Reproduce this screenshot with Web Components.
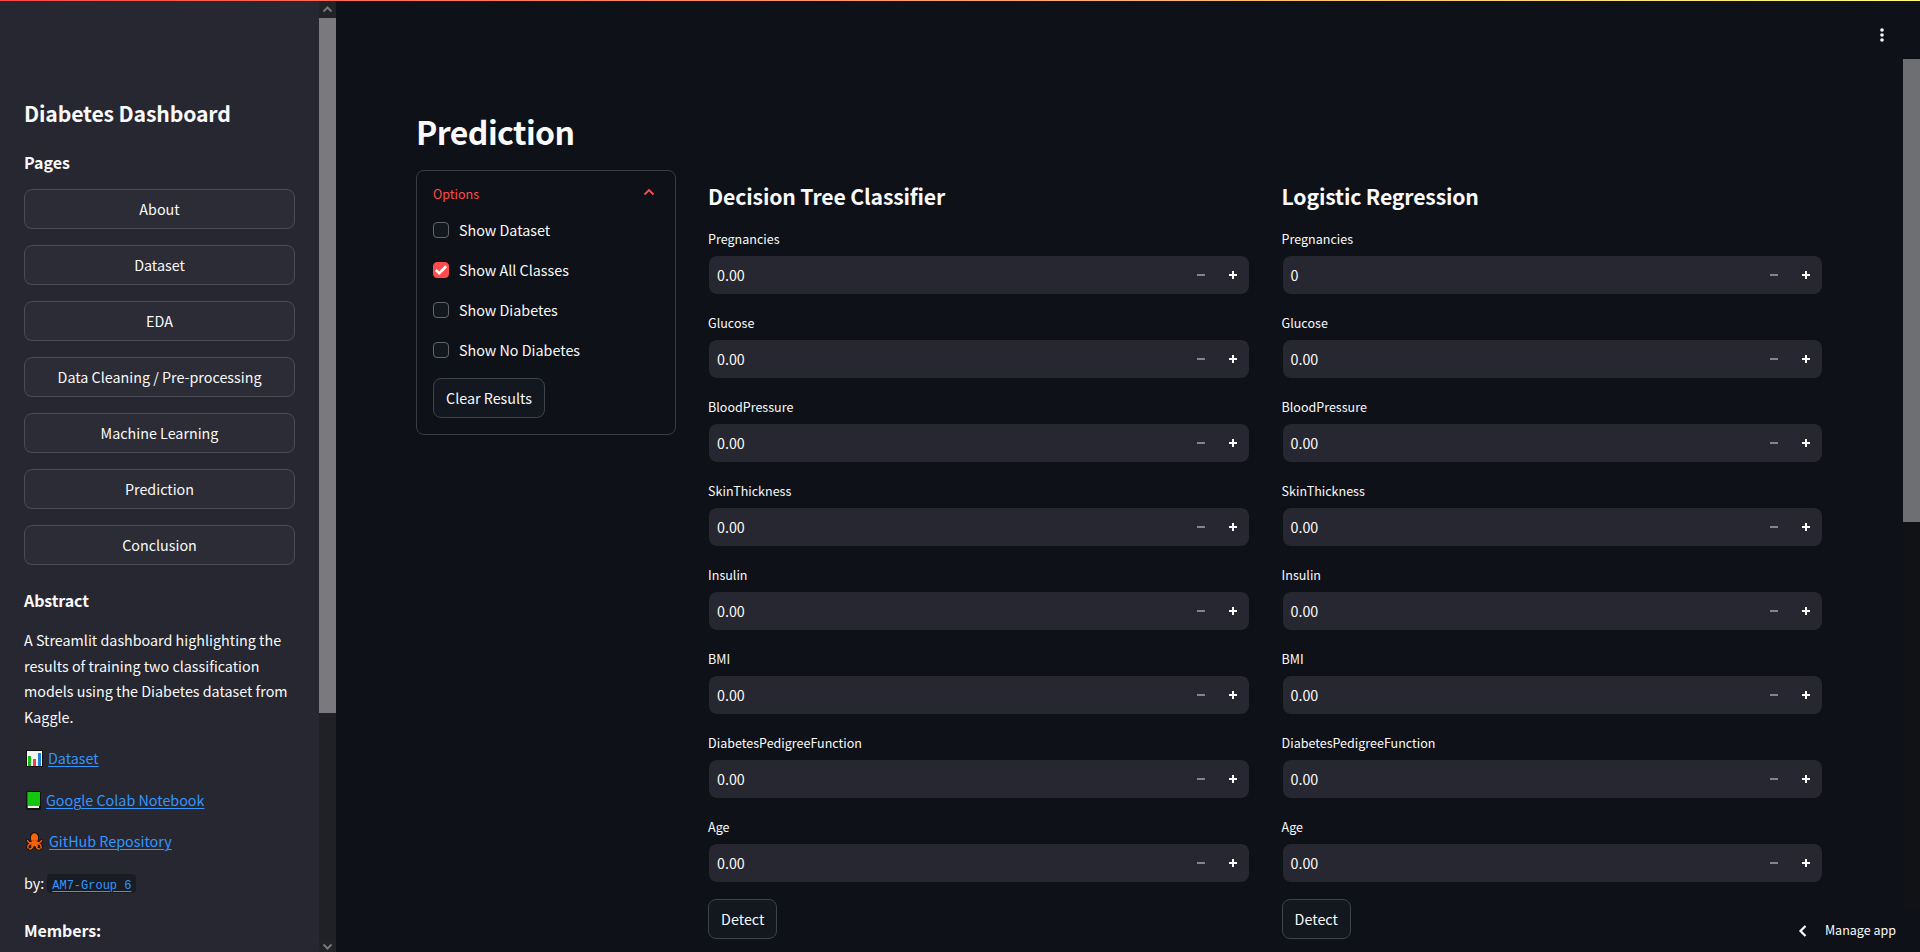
<!DOCTYPE html>
<html lang="en">
<head>
<meta charset="utf-8">
<title>Diabetes Dashboard</title>
<style>
html,body{margin:0;height:100%;overflow:hidden;background:#0e1117}
body{font-family:"Noto Sans CJK SC","Noto Sans",sans-serif;font-size:14.32px;color:#fafafa}
</style>
</head>
<body>
<dash-app></dash-app>
<script>
const define = (name, html, init) => {
  const t = document.createElement('template');
  t.innerHTML = '<style>*{box-sizing:border-box}:host{display:block;box-sizing:border-box}</style>' + html;
  customElements.define(name, class extends HTMLElement {
    connectedCallback() {
      if (this.shadowRoot) return;
      const root = this.attachShadow({mode: 'open'});
      root.append(t.content.cloneNode(true));
      if (init) init(this, root);
    }
  });
};

define('st-button', `<style>
:host{height:40px;border:1px solid #4b4c54;border-radius:8px;background:#2b2c36;display:flex;align-items:center;justify-content:center;white-space:nowrap;line-height:24px}
:host([dark]){background:#131720;border-color:#40434a;width:fit-content;padding:0 12px}
</style><span><slot></slot></span>`);

define('st-heading', `<style>
:host{font-weight:700;display:flex;align-items:center;white-space:nowrap;height:var(--h,30px);font-size:var(--fs,16px);line-height:1.2;letter-spacing:var(--ls,0)}
</style><slot></slot>`);

define('st-link', `<style>
:host{display:flex;align-items:center;height:25.6px;margin-bottom:15.9px;line-height:25.6px}
a{color:#3296ff;text-decoration:underline;text-underline-offset:2px;text-decoration-thickness:1px;white-space:nowrap}
::slotted(svg){flex:none;margin-right:var(--gap,5px)}
</style><slot name="icon"></slot><a><slot></slot></a>`);

define('st-scrollbar', `<style>
:host{width:17px;display:flex;flex-direction:column;flex:none;background:var(--track,#202127)}
.arrow{height:17px;display:flex;align-items:center;justify-content:center;background:#222327;flex:none;padding-bottom:2px}
.arrow svg{display:block}
.thumb{height:var(--thumb,463px);background:var(--thumb-color,#7a797e)}
.fill{flex:1}
:host([plain]) .arrow{display:none}
path{fill:none;stroke:#77777c;stroke-width:2}
</style>
<div class="arrow"><svg width="11" height="8"><path d="M1.5 6.5 5.5 2.5 9.5 6.5"/></svg></div>
<div class="thumb"></div><div class="fill"></div>
<div class="arrow" style="height:14px;padding:4px 0 0"><svg width="11" height="8"><path d="M1.5 1.5 5.5 5.5 9.5 1.5"/></svg></div>`);

define('st-checkbox', `<style>
:host{display:flex;height:24px;align-items:center;margin-bottom:16px;line-height:24px;white-space:nowrap}
.box{width:16px;height:16px;border:1px solid #62646b;border-radius:4px;background:#131720;margin:0 10px 1px 0;flex:none}
:host([checked]) .box{background:#ff4b4b;border-color:#ff4b4b}
svg{display:none}
:host([checked]) svg{display:block}
</style>
<div class="box"><svg width="14" height="14"><path d="M1.8 7 5.2 10.1 12.2 3.2" fill="none" stroke="#fff" stroke-width="2.6"/></svg></div><slot></slot>`);

define('st-number', `<style>
:host{height:84px}
label{display:flex;align-items:center;height:24px;font-size:12.53px;line-height:24px;margin-bottom:5px}
.field{height:38px;margin-left:1px;background:#262730;border-radius:8px;display:flex;align-items:center;padding:0 9px 0 7.9px}
.val{flex:1;line-height:24px}
svg{display:block;flex:none}
</style>
<label></label><div class="field"><span class="val"></span>
<svg width="46" height="16"><path d="M3 8h8" stroke="#808495" stroke-width="2"/><path d="M35 8h8M39 4v8" stroke="#fff" stroke-width="2"/></svg></div>`,
(el, r) => {
  r.querySelector('label').textContent = el.getAttribute('label');
  r.querySelector('.val').textContent = el.getAttribute('value');
});

define('model-form', `<style>
:host{display:block;min-width:0}
st-heading{--fs:21.2px;--ls:-.15px;--h:40px;margin-bottom:11px}
#rows{display:block}
</style><st-heading><slot></slot></st-heading><div id="rows"></div><st-button dark>Detect</st-button>`,
(el, r) => {
  const names = ['Pregnancies','Glucose','BloodPressure','SkinThickness','Insulin','BMI','DiabetesPedigreeFunction','Age'];
  names.forEach((n, i) => {
    const f = document.createElement('st-number');
    f.setAttribute('label', n);
    f.setAttribute('value', i === 0 ? el.getAttribute('first') : '0.00');
    r.getElementById('rows').append(f);
  });
});

define('st-expander', `<style>
:host{height:265px;border:1px solid #3b3d43;border-radius:8px;padding:11px 16px 16px}
header{display:flex;justify-content:space-between;align-items:center;height:22px;color:#ff4b4b;font-size:12.53px;margin-bottom:14px;padding-right:4px}
st-button{margin-top:-1px}
</style>
<header><span>Options</span><svg width="12" height="10"><path d="M1.5 6.5 6 2 10.5 6.5" fill="none" stroke="#ff4b4b" stroke-width="1.8"/></svg></header>
<slot></slot>`);

define('side-bar', `<style>
:host{width:336px;height:952px;display:flex;background:#262730;flex:none;overflow:hidden}
.content{width:319px;padding:93px 24px 0;flex:none}
nav{display:grid;gap:16px;margin-bottom:20px}
p{margin:0;line-height:25.6px;white-space:nowrap}
.by{display:flex;align-items:center;height:25.6px;margin-bottom:19px}
code{font-family:"Liberation Mono",monospace;font-size:12px;line-height:19px;height:19px;padding:0 5px;border-radius:4px;background:#1a1c24;color:#3296ff;margin:1px 0 0 3px;white-space:pre}
code span{position:relative;top:3px;text-decoration:underline;text-underline-offset:2px}
</style>
<div class="content">
<st-heading style="--fs:21.2px;--ls:-.15px;--h:40px;margin-bottom:14px">Diabetes Dashboard</st-heading>
<st-heading style="--h:32px;margin-bottom:10px">Pages</st-heading>
<nav><st-button>About</st-button><st-button>Dataset</st-button><st-button>EDA</st-button><st-button>Data Cleaning / Pre-processing</st-button><st-button>Machine Learning</st-button><st-button>Prediction</st-button><st-button>Conclusion</st-button></nav>
<st-heading style="--h:32px;margin-bottom:10px;--ls:-.1px">Abstract</st-heading>
<p style="margin-bottom:16px">A Streamlit dashboard highlighting the<br>results of training two classification<br>models using the Diabetes dataset from<br>Kaggle.</p>
<st-link><svg slot="icon" width="19" height="19"><path d="M2 1h17v17H2z" fill="#111"/><path d="M3 2h15v15H3z" fill="#f4f4f4"/><path d="M4 7h3v10H4z" fill="#16b916"/><path d="M9 10h3v7H9z" fill="#ef4a31"/><path d="M14 4h3v13h-3z" fill="#1b82d8"/></svg>Dataset</st-link>
<st-link style="--gap:3px"><svg slot="icon" width="19" height="19" style="margin-top:1px"><rect x="2" y="0" width="15" height="19" rx="2" fill="#111"/><path d="M4 1h12v14H3V2z" fill="#16c60c"/><path d="M3 15h12v2H4z" fill="#f2f2f2"/><path d="M3.500 2v14" stroke="#0b8d08"/></svg>Google Colab Notebook</st-link>
<st-link style="--gap:6px"><svg slot="icon" width="19" height="19" fill="none" stroke-linecap="round" stroke-linejoin="round"><g stroke="#15120f" stroke-width="3.400"><path d="M9 10Q5 12 3.500 8.500M12 10q4 2 5.500-1.500M8 11.500Q3 12 4 16M13 11.500q5 .5 4 4.500M9 12q0 5-3.500 5M12 12q0 5 3.500 5"/></g><ellipse cx="10.500" cy="5.500" rx="4.600" ry="5.500" fill="#15120f"/><ellipse cx="10.500" cy="6" rx="3.700" ry="4.700" fill="#f7630c"/><path d="M8 9h5l1 6-3.500-1L7 15z" fill="#f7630c"/><g stroke="#f7630c" stroke-width="1.500"><path d="M9 10Q5 12 3.500 8.500M12 10q4 2 5.500-1.500M8 11.500Q3 12 4 16M13 11.500q5 .5 4 4.500M9 12q0 5-3.500 5M12 12q0 5 3.500 5"/></g><path d="M9 8.500h.1M12 8.500h.1" stroke="#a33a00"/></svg>GitHub Repository</st-link>
<div class="by"><span>by:</span><code><span>AM7-Group 6</span></code></div>
<st-heading style="--h:32px;--ls:-.1px">Members:</st-heading>
</div>
<st-scrollbar style="--thumb:695px;padding-top:1px"></st-scrollbar>`);

define('main-view', `<style>
:host{flex:1;height:952px;padding:102px 0 0 80px;overflow:hidden}
.grid{display:grid;grid-template-columns:259.8px 540.8px 540.8px;column-gap:32.7px;align-items:start;margin-top:10px}
.grid>:nth-child(2),.grid>:nth-child(3){margin-left:-.4px;margin-right:.4px}
model-form{padding-top:6px}
</style>
<st-heading style="--fs:32px;--h:58px;--ls:-.55px">Prediction</st-heading>
<div class="grid">
<st-expander><st-checkbox>Show Dataset</st-checkbox><st-checkbox checked>Show All Classes</st-checkbox><st-checkbox>Show Diabetes</st-checkbox><st-checkbox>Show No Diabetes</st-checkbox><st-button dark>Clear Results</st-button></st-expander>
<model-form first="0.00">Decision Tree Classifier</model-form>
<model-form first="0">Logistic Regression</model-form>
</div>`);

define('manage-app', `<style>
:host{position:absolute;right:0;bottom:0;height:43px;display:flex;align-items:center;padding:0 24px 2px 14px;background:#0e1117;font-size:12.53px;line-height:24px;gap:17px}
svg{margin-top:2px}
</style><svg width="11" height="14"><path d="M8.500 2 3.500 7l5 5" fill="none" stroke="#fff" stroke-width="2.200"/></svg><slot></slot>`);

define('dash-app', `<style>
:host{display:flex;height:952px;position:relative;overflow:hidden}
.bar{position:absolute;inset:0 0 auto 0;height:1px;background:linear-gradient(90deg,#ff4b4b,#fffd80)}
.menu{position:absolute;right:33px;top:26px}
st-scrollbar{margin-top:59px}
</style>
<side-bar></side-bar><main-view></main-view>
<st-scrollbar plain style="--track:#111216;--thumb-color:#6e6f73"></st-scrollbar>
<div class="bar"></div>
<svg class="menu" width="10" height="18" fill="#fafafa"><circle cx="5" cy="4" r="1.800"/><circle cx="5" cy="9" r="1.800"/><circle cx="5" cy="14" r="1.800"/></svg>
<manage-app>Manage app</manage-app>`);
</script>
</body>
</html>
